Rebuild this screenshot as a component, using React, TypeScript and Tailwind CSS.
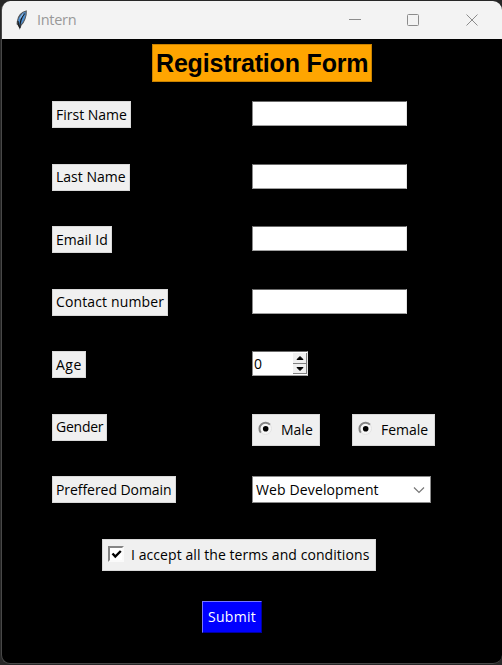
import React from "react";

const labelBase = "flex h-[27px] items-center border border-[#d9d9d9] bg-[#f0f0f0] pl-[3px] whitespace-nowrap";
const sunken = "border border-t-[#696969] border-l-[#8a8a8a] border-r-[#e3e3e3] border-b-[#a0a0a0] bg-white";

function Row({ text, width, tracking, children }: { text: string; width: string; tracking: string; children: React.ReactNode }) {
  return (
    <div className="flex h-[62.5px] items-start pl-[50px]">
      <div className="w-[200px]">
        <div className={`${labelBase} ${width} ${tracking}`}>{text}</div>
      </div>
      {children}
    </div>
  );
}

function Entry() {
  return <input aria-label="Entry" className={`h-[25px] w-[155px] rounded-none px-1 outline-none ${sunken}`} />;
}

function Radio({ text, width }: { text: string; width: string }) {
  return (
    <div className={`flex h-8 items-center border border-[#d9d9d9] bg-[#f0f0f0] pl-[5px] whitespace-nowrap ${width}`}>
      <svg width="15" height="15" viewBox="0 0 15 15" className="mr-2 mb-0.5 shrink-0" fill="none">
        <circle cx="7.5" cy="7.5" r="6" fill="#f6f6f6" stroke="#e3e3e3" />
        <path d="M2.8 11.6A6.1 6.1 0 0 1 12 3.6" stroke="#858585" strokeWidth="2" />
        <circle cx="7.7" cy="7.7" r="2.8" fill="#000" />
      </svg>
      {text}
    </div>
  );
}

export default function App() {
  return (
    <div className="h-[665px] w-[502px] overflow-hidden bg-[#272727] pt-px pl-px font-['Open_Sans','Noto_Sans',sans-serif] text-[14px] leading-[20px] text-black">
      <div className="h-[663px] w-[501px] overflow-hidden rounded-[9px] border-b border-l border-[#484848] bg-black">
        <div className="flex h-[38px] items-center bg-[#f3f3f3] text-[#999]">
          <svg width="14" height="22" viewBox="0 0 14 22" className="ml-[13px] shrink-0">
            <path d="M11.2 2C7 2.8 2.8 7 2.4 12.5L2.2 15L4 16.5L4.8 19L6 16.2C9.2 13 11.6 7 11.2 2Z" fill="#4d8fd0" stroke="#55585c" strokeWidth="1.2" />
            <path d="M9.4 4.5C7 7.5 5 11.5 4.8 18.5" stroke="#15191e" strokeWidth="1.3" fill="none" />
            <path d="M8.4 4.5L5 9.5" stroke="#8dbbea" strokeWidth="1.2" />
            <path d="M3 12L3.6 16.2L5 19" stroke="#202020" strokeWidth="1.3" fill="none" />
          </svg>
          <span className="ml-2 text-[14.5px] tracking-[-0.3px]">Intern</span>
          <svg width="140" height="14" viewBox="0 0 140 14" className="ml-auto mr-[17px] shrink-0" fill="none" stroke="#8c8c8c">
            <path d="M4 6.5H16" />
            <rect x="62.5" y="1.5" width="11" height="11" rx="1" />
            <path d="M121.5 1.5L132.5 12.5M132.5 1.5L121.5 12.5" />
          </svg>
        </div>
        <div className="h-[62px] pt-[5px] pl-[150px]">
          <h1 className="flex h-[38px] w-[220px] items-center border border-[#c98200] bg-[#ffa500] pl-[3px] font-['Liberation_Sans',Arial,sans-serif] text-[25px] font-bold tracking-[-0.17px] whitespace-nowrap">Registration Form</h1>
        </div>
        <Row text="First Name" width="w-[79px]" tracking="tracking-normal"><Entry /></Row>
        <Row text="Last Name" width="w-[78px]" tracking="tracking-normal"><Entry /></Row>
        <Row text="Email Id" width="w-[60px]" tracking="tracking-normal"><Entry /></Row>
        <Row text="Contact number" width="w-[116px]" tracking="tracking-[0.13px]"><Entry /></Row>
        <Row text="Age" width="w-[34px]" tracking="tracking-[0.5px]">
          <div className={`flex h-[25px] w-[56px] items-center pl-px ${sunken}`}>
            <span>0</span>
            <div className="ml-auto flex h-[21px] w-[14px] flex-col">
              {["M4 6.5L7 3.5L10 6.5Z", "M4 3.5L7 6.5L10 3.5Z"].map((d) => (
                <div key={d} className="h-[10.5px] w-[14px] border-r border-b border-[#808080] bg-[#f0f0f0]">
                  <svg width="13" height="9" viewBox="0 0 13 9"><path d={d} fill="#000" stroke="#000" strokeWidth="1" /></svg>
                </div>
              ))}
            </div>
          </div>
        </Row>
        <Row text="Gender" width="w-[55px]" tracking="tracking-[-0.25px]">
          <div className="w-[100px]"><Radio text="Male" width="w-[68px]" /></div>
          <Radio text="Female" width="w-[83px]" />
        </Row>
        <Row text="Preffered Domain" width="w-[124px]" tracking="tracking-[-0.06px]">
          <div className="flex h-[27px] w-[179px] items-center justify-between border border-[#8a8a8a] bg-white pr-[5px] pl-[3px] tracking-[0.13px] whitespace-nowrap">
            Web Development
            <svg width="12" height="8" viewBox="0 0 12 8" fill="none" stroke="#777" strokeWidth="1.2"><path d="M1 1.5L6 6.5L11 1.5" /></svg>
          </div>
        </Row>
        <div className="flex h-[62.5px] items-start pl-[100px]">
          <div className="flex h-8 w-[274px] items-center border border-[#d9d9d9] bg-[#f0f0f0] pl-[5px] tracking-[0.07px] whitespace-nowrap">
            <span className="mr-[7px] mb-px flex size-4 items-center justify-center border-2 border-t-[#858585] border-r-[#fafafa] border-b-[#fafafa] border-l-[#858585] bg-white">
              <svg width="11" height="11" viewBox="0 0 11 11" className="shrink-0" fill="none" stroke="#000" strokeWidth="2.4"><path d="M1.5 4.5L4.3 7.5L9.8 2" /></svg>
            </span>
            I accept all the terms and conditions
          </div>
        </div>
        <div className="pl-[200px]">
          <button className="flex h-8 w-[60px] items-center border border-t-[#7777ff] border-r-[#0000a0] border-b-[#0000a0] border-l-[#7777ff] bg-[#0000ff] pl-[5px] tracking-[0.3px] text-white">Submit</button>
        </div>
      </div>
    </div>
  );
}
